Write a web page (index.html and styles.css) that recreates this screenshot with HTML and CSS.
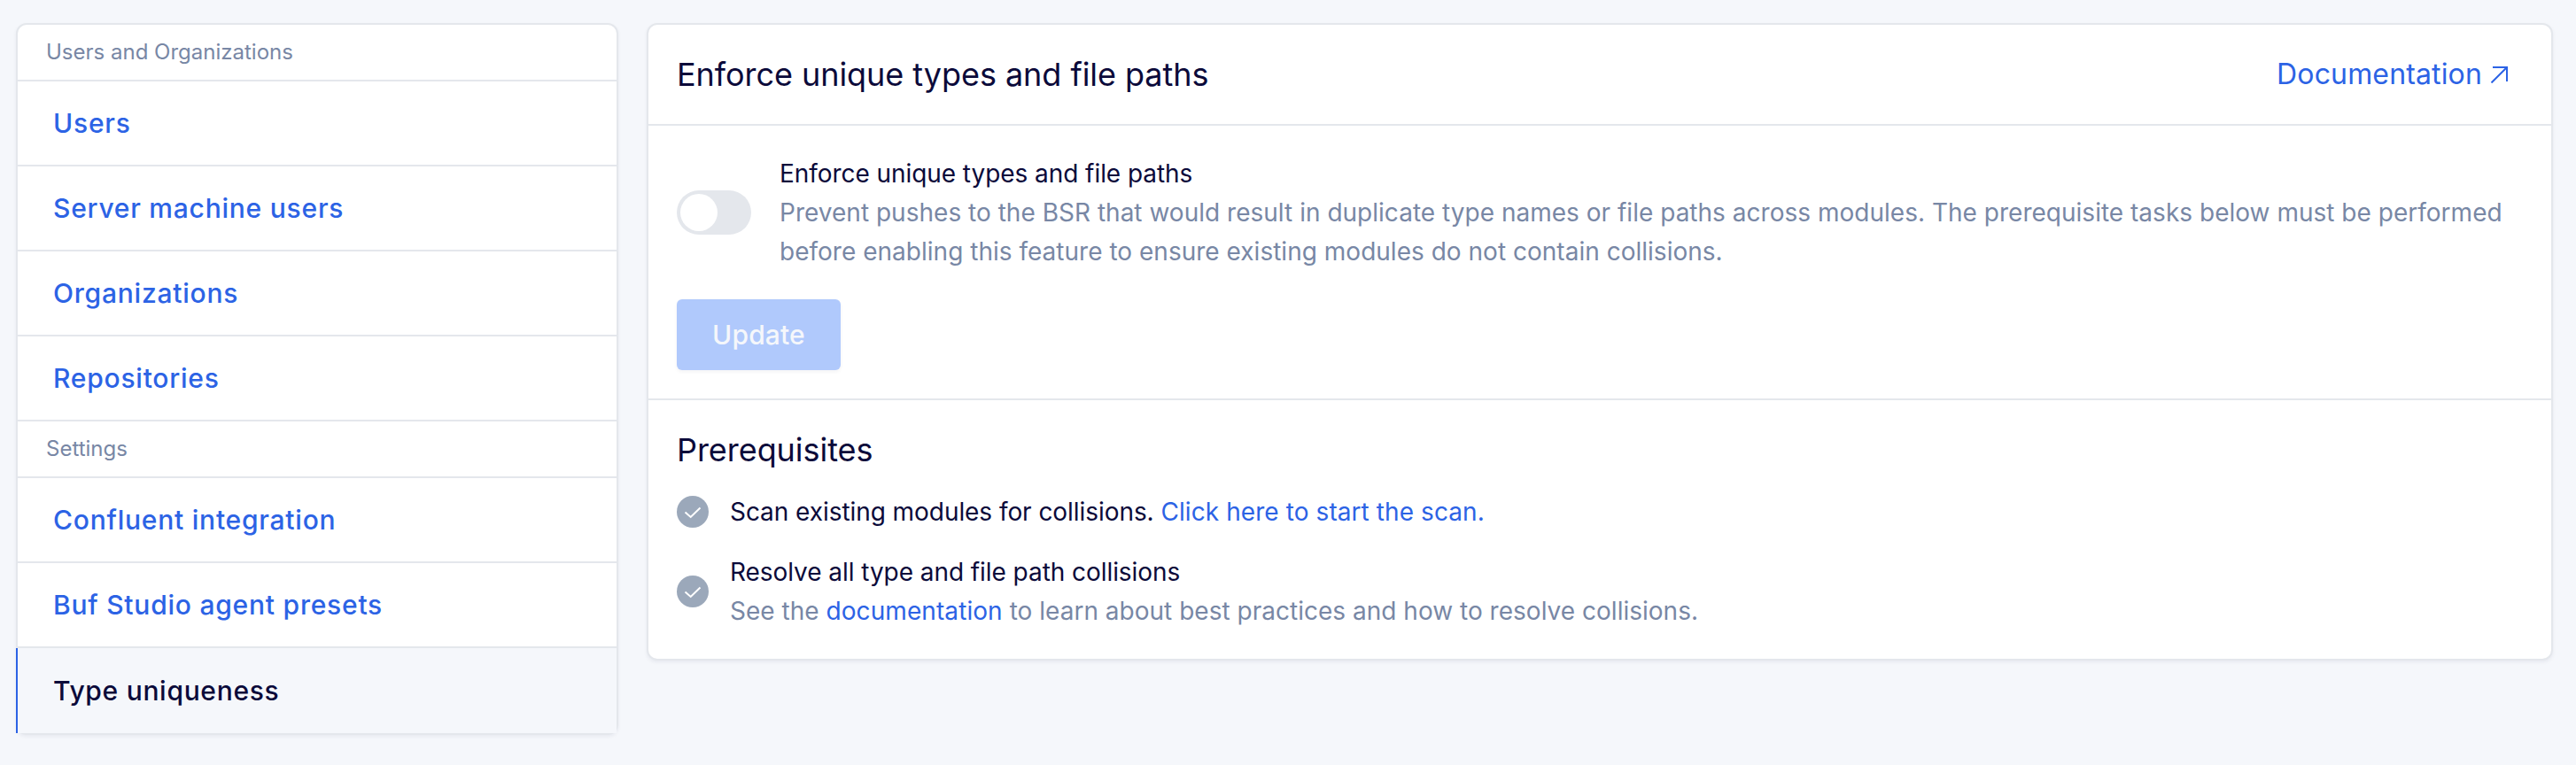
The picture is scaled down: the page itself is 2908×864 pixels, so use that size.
FILE: index.html
```html
<!DOCTYPE html>
<html lang="en">
<head>
<meta charset="utf-8">
<title>Type uniqueness</title>
<link rel="stylesheet" href="styles.css">
</head>
<body>
<div class="page">
  <nav class="sidebar">
    <div class="section">Users and Organizations</div>
    <a class="item">Users</a>
    <a class="item">Server machine users</a>
    <a class="item">Organizations</a>
    <a class="item">Repositories</a>
    <div class="section">Settings</div>
    <a class="item">Confluent integration</a>
    <a class="item">Buf Studio agent presets</a>
    <a class="item active">Type uniqueness</a>
  </nav>
  <main class="card">
    <header class="card-header">
      <h1 class="title">Enforce unique types and file paths</h1>
      <a class="doc-link"><span class="doc-label">Documentation</span>
        <svg class="arrow" viewBox="0 0 20 20"><path d="M2 2H18V18M18 2L0.5 19.5"/></svg>
      </a>
    </header>
    <section class="enforce">
      <div class="setting">
        <div class="toggle"><div class="knob"></div></div>
        <div class="text">
          <div class="strong"><span>Enforce unique types and file paths</span></div>
          <div class="muted">Prevent pushes to the BSR that would result in duplicate type names or file paths across modules. The prerequisite tasks below must be performed before enabling this feature to ensure existing modules do not contain collisions.</div>
        </div>
      </div>
      <button class="update"><span>Update</span></button>
    </section>
    <section class="prereq">
      <h2 class="title">Prerequisites</h2>
      <div class="task">
        <svg class="check" viewBox="0 0 36 36"><circle cx="18" cy="18" r="18"/><path d="M9.5 18.5L15.7 24L26.5 13.5"/></svg>
        <div class="text strong"><span>Scan existing modules for collisions. <a class="link">Click here to start the scan.</a></span></div>
      </div>
      <div class="task">
        <svg class="check" viewBox="0 0 36 36"><circle cx="18" cy="18" r="18"/><path d="M9.5 18.5L15.7 24L26.5 13.5"/></svg>
        <div class="text">
          <div class="strong"><span>Resolve all type and file path collisions</span></div>
          <div class="muted"><span>See the <a class="link">documentation</a> to learn about best practices and how to resolve collisions.</span></div>
        </div>
      </div>
    </section>
  </main>
</div>
</body>
</html>
```
FILE: styles.css
```css
* { box-sizing: border-box; }
body {
  margin: 0;
  background: #f5f7fb;
  font-family: Inter, "Liberation Sans", sans-serif;
  color: #0b0a3a;
}
.page {
  display: flex;
  align-items: flex-start;
  gap: 32px;
  height: 864px;
  padding: 26px 26px 0 18px;
}
.sidebar {
  width: 680px;
  flex: none;
  border: 2px solid #e4e7ec;
  border-radius: 12px;
  background: #fff;
  box-shadow: 0 2px 4px rgba(20, 20, 60, 0.06);
}
.section {
  height: 64px;
  padding-left: 32px;
  border-bottom: 2px solid #e4e7ec;
  font-size: 24px;
  line-height: 62px;
  color: #7887a5;
}
.item {
  display: block;
  height: 96px;
  padding-left: 40px;
  border-bottom: 2px solid #e4e7ec;
  font-size: 30px;
  font-weight: 500;
  line-height: 94px;
  letter-spacing: 0.77px;
  color: #2c63e5;
}
.item.active {
  margin-left: -2px;
  border-left: 2px solid #2c63e5;
  border-bottom: 0;
  background: #f5f7fb;
  line-height: 96px;
  letter-spacing: 0.7px;
  color: #0b0a3a;
}
.card {
  flex: 1;
  border: 2px solid #e4e7ec;
  border-radius: 12px;
  background: #fff;
  box-shadow: 0 2px 4px rgba(20, 20, 60, 0.06);
}
.card-header {
  display: flex;
  align-items: center;
  justify-content: space-between;
  height: 114px;
  padding: 0 48px 0 32px;
  border-bottom: 2px solid #e4e7ec;
}
.title {
  margin: 0;
  font-size: 36px;
  font-weight: 400;
  line-height: 48px;
  letter-spacing: -0.05px;
}
.doc-link {
  display: flex;
  align-items: center;
  gap: 10px;
  font-size: 32px;
  letter-spacing: 0.15px;
  color: #2c63e5;
}
.doc-label { padding-bottom: 2px; }
.arrow {
  width: 20px;
  height: 20px;
  fill: none;
  stroke: #2c63e5;
  stroke-width: 2;
}
.enforce {
  height: 310px;
  padding: 32px;
  border-bottom: 2px solid #e4e7ec;
}
.setting {
  display: flex;
  align-items: center;
  gap: 32px;
}
.toggle {
  flex: none;
  width: 84px;
  height: 50px;
  padding: 4px;
  border-radius: 25px;
  background: #e4e7ec;
}
.knob {
  width: 42px;
  height: 42px;
  border-radius: 50%;
  background: #fff;
}
.text {
  font-size: 28px;
  line-height: 44px;
}
.strong { letter-spacing: -0.06px; }
.muted {
  letter-spacing: 0.015px;
  color: #7887a5;
}
.link {
  letter-spacing: 0.08px;
  color: #2c63e5;
}
.update {
  display: block;
  width: 185px;
  height: 80px;
  margin-top: 32px;
  padding: 0;
  border: 0;
  border-radius: 6px;
  background: #b0c9fc;
  box-shadow: 0 2px 4px rgba(20, 20, 60, 0.05);
  font: 500 30px Inter, sans-serif;
  letter-spacing: 0.15px;
  color: #f5f7fb;
}
.prereq { padding: 32px; }
.task {
  display: flex;
  align-items: center;
  gap: 24px;
  margin-top: 24px;
}
.check {
  width: 36px;
  height: 36px;
  flex: none;
}
.check circle { fill: #9ba8ba; }
.check path {
  fill: none;
  stroke: #fff;
  stroke-width: 2;
}
```
